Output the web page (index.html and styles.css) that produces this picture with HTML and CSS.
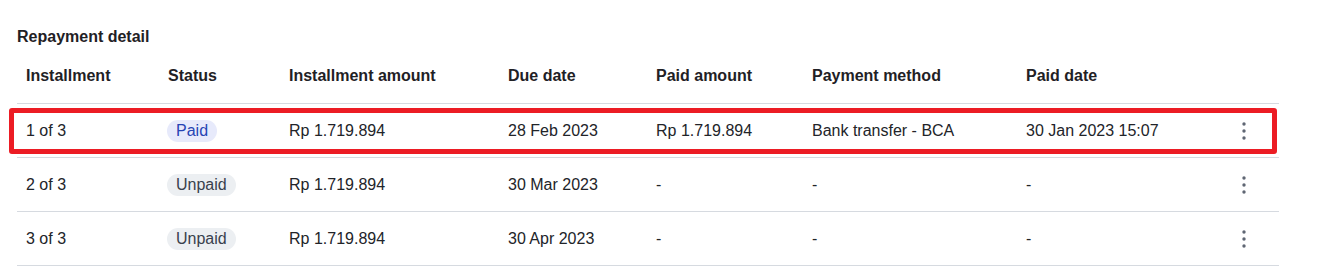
FILE: index.html
```html
<!DOCTYPE html>
<html>
<head>
<meta charset="utf-8">
<link rel="stylesheet" href="styles.css">
</head>
<body>
<section class="panel">
  <h2 class="title">Repayment detail</h2>
  <div class="table">
    <div class="row head">
      <div>Installment</div>
      <div>Status</div>
      <div>Installment amount</div>
      <div>Due date</div>
      <div>Paid amount</div>
      <div>Payment method</div>
      <div>Paid date</div>
      <div></div>
    </div>
    <div class="row highlighted">
      <div>1 of 3</div>
      <div><span class="badge paid">Paid</span></div>
      <div>Rp 1.719.894</div>
      <div>28 Feb 2023</div>
      <div>Rp 1.719.894</div>
      <div>Bank transfer - BCA</div>
      <div>30 Jan 2023 15:07</div>
      <div class="menu"><svg width="6" height="18" viewBox="0 0 6 18"><circle cx="3" cy="2" r="1.7"/><circle cx="3" cy="9" r="1.7"/><circle cx="3" cy="16" r="1.7"/></svg></div>
      <span class="mark"></span>
    </div>
    <div class="row">
      <div>2 of 3</div>
      <div><span class="badge unpaid">Unpaid</span></div>
      <div>Rp 1.719.894</div>
      <div>30 Mar 2023</div>
      <div>-</div>
      <div>-</div>
      <div>-</div>
      <div class="menu"><svg width="6" height="18" viewBox="0 0 6 18"><circle cx="3" cy="2" r="1.7"/><circle cx="3" cy="9" r="1.7"/><circle cx="3" cy="16" r="1.7"/></svg></div>
    </div>
    <div class="row">
      <div>3 of 3</div>
      <div><span class="badge unpaid">Unpaid</span></div>
      <div>Rp 1.719.894</div>
      <div>30 Apr 2023</div>
      <div>-</div>
      <div>-</div>
      <div>-</div>
      <div class="menu"><svg width="6" height="18" viewBox="0 0 6 18"><circle cx="3" cy="2" r="1.7"/><circle cx="3" cy="9" r="1.7"/><circle cx="3" cy="16" r="1.7"/></svg></div>
    </div>
  </div>
</section>
</body>
</html>
```

FILE: styles.css
```css
html, body {
  margin: 0;
  padding: 0;
  background: #ffffff;
}
body {
  font-family: "Liberation Sans", Arial, sans-serif;
  font-size: 16px;
  color: #222429;
}
.panel {
  width: 1262px;
  padding: 27px 0 0 17px;
}
.title {
  margin: 0;
  font-size: 16px;
  line-height: 20px;
  font-weight: 700;
  color: #1f2125;
}
.table {
  display: flex;
  flex-direction: column;
}
.row {
  position: relative;
  display: grid;
  grid-template-columns: 142px 121px 219px 148px 156px 214px 200px 36px;
  padding: 0 17px 0 9px;
  height: 53px;
  align-items: center;
  border-bottom: 1px solid #d6dae0;
  line-height: 20px;
}
.row.head {
  height: 37px;
  padding-top: 19px;
  align-items: start;
  font-weight: 700;
  color: #1f2125;
}
.badge {
  display: inline-block;
  margin-left: -1px;
  padding: 1px 9px 1px 9px;
  border-radius: 12px;
  line-height: 20px;
}
.badge.paid {
  background: #e7eafb;
  color: #2644b4;
}
.badge.unpaid {
  background: #eceff2;
  color: #39414d;
}
.menu {
  display: flex;
  justify-content: center;
}
.menu svg {
  fill: #5f6673;
  display: block;
}
.mark {
  position: absolute;
  left: -8px;
  right: 2px;
  top: 4px;
  bottom: 3px;
  border: 5px solid #ec1c24;
  border-radius: 3px;
  pointer-events: none;
}
```
